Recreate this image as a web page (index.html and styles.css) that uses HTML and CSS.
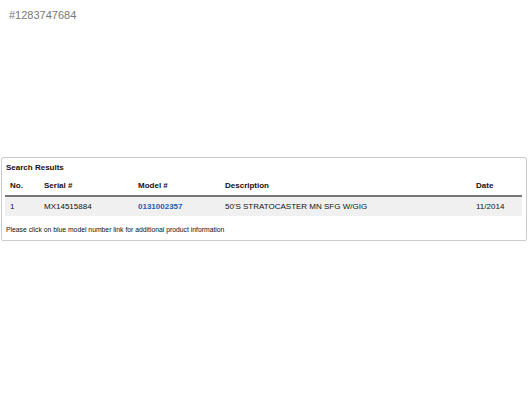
FILE: index.html
```html
<!DOCTYPE html>
<html>
<head>
<meta charset="utf-8">
<link rel="stylesheet" href="styles.css">
</head>
<body>
<div class="page">
  <div class="ref">#1283747684</div>
  <div class="results">
    <div class="title">Search Results</div>
    <table class="grid">
      <thead>
        <tr>
          <th class="c-no">No.</th>
          <th class="c-serial">Serial #</th>
          <th class="c-model">Model #</th>
          <th class="c-desc">Description</th>
          <th class="c-date">Date</th>
        </tr>
      </thead>
      <tbody>
        <tr>
          <td>1</td>
          <td>MX14515884</td>
          <td><a class="model" href="#">0131002357</a></td>
          <td>50'S STRATOCASTER MN SFG W/GIG</td>
          <td>11/2014</td>
        </tr>
      </tbody>
    </table>
    <div class="note">Please click on blue model number link for additional product information</div>
  </div>
</div>
</body>
</html>
```
FILE: styles.css
```css
* { box-sizing: border-box; }
html, body { margin: 0; padding: 0; background: #fff; }
body { font-family: "Liberation Sans", Arial, Helvetica, sans-serif; color: #111; }
.page { width: 528px; height: 396px; padding: 9px 1px 0 1px; }
.ref { font-size: 11px; color: #777; padding-left: 8px; line-height: 13px; }
.results {
  margin-top: 135px;
  border: 1px solid #ccc;
  border-radius: 2px;
  padding: 5px 4px 6px 3px;
}
.title { font-size: 8px; font-weight: bold; line-height: 10px; margin-bottom: 8px; padding-left: 1px; }
.grid { width: 100%; border-collapse: collapse; font-size: 8px; }
.grid th {
  text-align: left; font-weight: bold; line-height: 10px;
  padding: 0 5px 4px 5px;
  border-bottom: 2px solid #777;
}
.grid td {
  line-height: 10px; padding: 5px 5px 4px 5px;
  background: #f0f0f0;
}
.c-no { width: 34px; }
.c-serial { width: 94px; }
.c-model { width: 87px; }
.c-date { width: 51px; }
.model { color: #1a5fb4; font-weight: bold; text-decoration: none; }
.note { font-size: 6.8px; line-height: 9px; margin-top: 9px; padding-left: 1px; }
```
